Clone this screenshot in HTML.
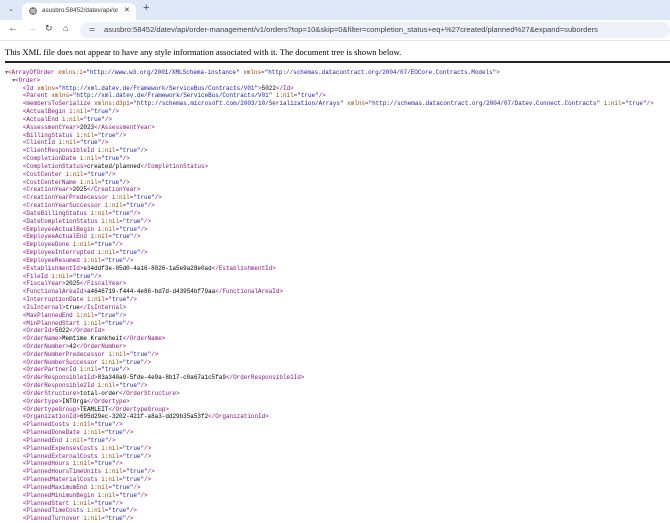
<!DOCTYPE html>
<html><head><meta charset="utf-8"><style>
*{margin:0;padding:0;box-sizing:border-box}
body{width:670px;height:522px;overflow:hidden;background:#fff;font-family:"Liberation Sans",sans-serif;position:relative}
.tabbar{position:absolute;left:0;top:0;width:670px;height:20px;background:#dfe8f6}
.tab{position:absolute;left:22px;top:3px;width:114px;height:17px;background:#fff;border-radius:6px 6px 0 0;font-size:6.3px;color:#333}
.toolbar{position:absolute;left:0;top:20px;width:670px;height:21px;background:#fff;border-bottom:1px solid #e3e3e3}
.url{position:absolute;left:80px;top:2px;width:590px;height:16px;background:#edf1f8;border-radius:8px;font-size:7.6px;color:#444;line-height:16px;padding-left:24px}
.hdr{position:absolute;left:5px;top:47px;font-family:"Liberation Serif",serif;font-size:8.6px;color:#000;white-space:nowrap}
.rule{position:absolute;left:5px;top:61px;width:665px;height:2px;background:#222}
pre{position:absolute;left:5px;top:69px;font-family:"Liberation Mono",monospace;font-size:5.95px;line-height:7.83px;color:#000;white-space:pre}
.t{color:#881280}.a{color:#994500}.v{color:#1a1aa6}.g{color:#666}
</style></head><body>
<div class="tabbar">
<span style="position:absolute;left:8px;top:5px;font-size:7px;color:#444">⌄</span>
<div class="tab"><svg style="position:absolute;left:7px;top:4px" width="8" height="8" viewBox="0 0 8 8"><circle cx="4" cy="4" r="3.3" fill="none" stroke="#555" stroke-width="1"/><path d="M0.8 4h6.4M4 0.8c-1.5 2-1.5 4.4 0 6.4M4 0.8c1.5 2 1.5 4.4 0 6.4" stroke="#555" stroke-width="0.6" fill="none"/></svg><span style="position:absolute;left:20px;top:4px;width:76px;overflow:hidden;white-space:nowrap">asusbro:58452/datev/api/order</span><span style="position:absolute;left:102px;top:3px;font-size:7px">✕</span></div>
<span style="position:absolute;left:143px;top:2px;font-size:11px;color:#444">+</span>
</div>
<div class="toolbar">
<span style="position:absolute;left:8px;top:3px;font-size:10px;color:#444">←</span>
<span style="position:absolute;left:27px;top:3px;font-size:10px;color:#bbb">→</span>
<span style="position:absolute;left:45px;top:3px;font-size:9px;color:#444">↻</span>
<span style="position:absolute;left:63px;top:3px;font-size:9px;color:#444">⌂</span>
<div class="url"><span style="position:absolute;left:9px;top:0;font-size:7px">⚌</span>asusbro:58452/datev/api/order-management/v1/orders?top=10&amp;skip=0&amp;filter=completion_status+eq+%27created/planned%27&amp;expand=suborders</div>
</div>
<div class="hdr">This XML file does not appear to have any style information associated with it. The document tree is shown below.</div>
<div class="rule"></div>
<pre><span class="g">▾</span><span class="t">&lt;ArrayOfOrder</span> <span class="a">xmlns:i</span><span class="t">=</span><span class="v">"http://www.w3.org/2001/XMLSchema-instance"</span> <span class="a">xmlns</span><span class="t">=</span><span class="v">"http://schemas.datacontract.org/2004/07/EOCore.Contracts.Models"</span><span class="t">&gt;</span>
  <span class="g">▾</span><span class="t">&lt;Order&gt;</span>
     <span class="t">&lt;Id</span> <span class="a">xmlns</span><span class="t">=</span><span class="v">"http://xml.datev.de/Framework/ServiceBus/Contracts/V01"</span><span class="t">&gt;</span>5022<span class="t">&lt;/Id&gt;</span>
     <span class="t">&lt;Parent</span> <span class="a">xmlns</span><span class="t">=</span><span class="v">"http://xml.datev.de/Framework/ServiceBus/Contracts/V01"</span> <span class="a">i:nil</span><span class="t">=</span><span class="v">"true"</span><span class="t">/&gt;</span>
     <span class="t">&lt;membersToSerialize</span> <span class="a">xmlns:d3p1</span><span class="t">=</span><span class="v">"http://schemas.microsoft.com/2003/10/Serialization/Arrays"</span> <span class="a">xmlns</span><span class="t">=</span><span class="v">"http://schemas.datacontract.org/2004/07/Datev.Connect.Contracts"</span> <span class="a">i:nil</span><span class="t">=</span><span class="v">"true"</span><span class="t">/&gt;</span>
     <span class="t">&lt;ActualBegin</span> <span class="a">i:nil</span><span class="t">=</span><span class="v">"true"</span><span class="t">/&gt;</span>
     <span class="t">&lt;ActualEnd</span> <span class="a">i:nil</span><span class="t">=</span><span class="v">"true"</span><span class="t">/&gt;</span>
     <span class="t">&lt;AssessmentYear&gt;</span>2023<span class="t">&lt;/AssessmentYear&gt;</span>
     <span class="t">&lt;BillingStatus</span> <span class="a">i:nil</span><span class="t">=</span><span class="v">"true"</span><span class="t">/&gt;</span>
     <span class="t">&lt;ClientId</span> <span class="a">i:nil</span><span class="t">=</span><span class="v">"true"</span><span class="t">/&gt;</span>
     <span class="t">&lt;ClientResponsibleId</span> <span class="a">i:nil</span><span class="t">=</span><span class="v">"true"</span><span class="t">/&gt;</span>
     <span class="t">&lt;CompletionDate</span> <span class="a">i:nil</span><span class="t">=</span><span class="v">"true"</span><span class="t">/&gt;</span>
     <span class="t">&lt;CompletionStatus&gt;</span>created/planned<span class="t">&lt;/CompletionStatus&gt;</span>
     <span class="t">&lt;CostCenter</span> <span class="a">i:nil</span><span class="t">=</span><span class="v">"true"</span><span class="t">/&gt;</span>
     <span class="t">&lt;CostCenterName</span> <span class="a">i:nil</span><span class="t">=</span><span class="v">"true"</span><span class="t">/&gt;</span>
     <span class="t">&lt;CreationYear&gt;</span>2025<span class="t">&lt;/CreationYear&gt;</span>
     <span class="t">&lt;CreationYearPredecessor</span> <span class="a">i:nil</span><span class="t">=</span><span class="v">"true"</span><span class="t">/&gt;</span>
     <span class="t">&lt;CreationYearSuccessor</span> <span class="a">i:nil</span><span class="t">=</span><span class="v">"true"</span><span class="t">/&gt;</span>
     <span class="t">&lt;DateBillingStatus</span> <span class="a">i:nil</span><span class="t">=</span><span class="v">"true"</span><span class="t">/&gt;</span>
     <span class="t">&lt;DateCompletionStatus</span> <span class="a">i:nil</span><span class="t">=</span><span class="v">"true"</span><span class="t">/&gt;</span>
     <span class="t">&lt;EmployeeActualBegin</span> <span class="a">i:nil</span><span class="t">=</span><span class="v">"true"</span><span class="t">/&gt;</span>
     <span class="t">&lt;EmployeeActualEnd</span> <span class="a">i:nil</span><span class="t">=</span><span class="v">"true"</span><span class="t">/&gt;</span>
     <span class="t">&lt;EmployeeDone</span> <span class="a">i:nil</span><span class="t">=</span><span class="v">"true"</span><span class="t">/&gt;</span>
     <span class="t">&lt;EmployeeInterrupted</span> <span class="a">i:nil</span><span class="t">=</span><span class="v">"true"</span><span class="t">/&gt;</span>
     <span class="t">&lt;EmployeeResumed</span> <span class="a">i:nil</span><span class="t">=</span><span class="v">"true"</span><span class="t">/&gt;</span>
     <span class="t">&lt;EstablishmentId&gt;</span>e34ddf3e-05d0-4a16-8026-1a5e9a28e0ad<span class="t">&lt;/EstablishmentId&gt;</span>
     <span class="t">&lt;FileId</span> <span class="a">i:nil</span><span class="t">=</span><span class="v">"true"</span><span class="t">/&gt;</span>
     <span class="t">&lt;FiscalYear&gt;</span>2025<span class="t">&lt;/FiscalYear&gt;</span>
     <span class="t">&lt;FunctionalAreaId&gt;</span>a4646719-f444-4e86-bd7d-d43954bf79aa<span class="t">&lt;/FunctionalAreaId&gt;</span>
     <span class="t">&lt;InterruptionDate</span> <span class="a">i:nil</span><span class="t">=</span><span class="v">"true"</span><span class="t">/&gt;</span>
     <span class="t">&lt;IsInternal&gt;</span>true<span class="t">&lt;/IsInternal&gt;</span>
     <span class="t">&lt;MaxPlannedEnd</span> <span class="a">i:nil</span><span class="t">=</span><span class="v">"true"</span><span class="t">/&gt;</span>
     <span class="t">&lt;MinPlannedStart</span> <span class="a">i:nil</span><span class="t">=</span><span class="v">"true"</span><span class="t">/&gt;</span>
     <span class="t">&lt;OrderId&gt;</span>5022<span class="t">&lt;/OrderId&gt;</span>
     <span class="t">&lt;OrderName&gt;</span>Memtime Krankheit<span class="t">&lt;/OrderName&gt;</span>
     <span class="t">&lt;OrderNumber&gt;</span>42<span class="t">&lt;/OrderNumber&gt;</span>
     <span class="t">&lt;OrderNumberPredecessor</span> <span class="a">i:nil</span><span class="t">=</span><span class="v">"true"</span><span class="t">/&gt;</span>
     <span class="t">&lt;OrderNumberSuccessor</span> <span class="a">i:nil</span><span class="t">=</span><span class="v">"true"</span><span class="t">/&gt;</span>
     <span class="t">&lt;OrderPartnerId</span> <span class="a">i:nil</span><span class="t">=</span><span class="v">"true"</span><span class="t">/&gt;</span>
     <span class="t">&lt;OrderResponsible1Id&gt;</span>83a340a9-5fde-4e9a-8b17-c0a67a1c5fa9<span class="t">&lt;/OrderResponsible1Id&gt;</span>
     <span class="t">&lt;OrderResponsible2Id</span> <span class="a">i:nil</span><span class="t">=</span><span class="v">"true"</span><span class="t">/&gt;</span>
     <span class="t">&lt;OrderStructure&gt;</span>total-order<span class="t">&lt;/OrderStructure&gt;</span>
     <span class="t">&lt;Ordertype&gt;</span>INTOrga<span class="t">&lt;/Ordertype&gt;</span>
     <span class="t">&lt;OrdertypeGroup&gt;</span>TEAMLEIT<span class="t">&lt;/OrdertypeGroup&gt;</span>
     <span class="t">&lt;OrganizationId&gt;</span>695d29ec-3202-421f-a8a3-dd29b35a53f2<span class="t">&lt;/OrganizationId&gt;</span>
     <span class="t">&lt;PlannedCosts</span> <span class="a">i:nil</span><span class="t">=</span><span class="v">"true"</span><span class="t">/&gt;</span>
     <span class="t">&lt;PlannedDoneDate</span> <span class="a">i:nil</span><span class="t">=</span><span class="v">"true"</span><span class="t">/&gt;</span>
     <span class="t">&lt;PlannedEnd</span> <span class="a">i:nil</span><span class="t">=</span><span class="v">"true"</span><span class="t">/&gt;</span>
     <span class="t">&lt;PlannedExpensesCosts</span> <span class="a">i:nil</span><span class="t">=</span><span class="v">"true"</span><span class="t">/&gt;</span>
     <span class="t">&lt;PlannedExternalCosts</span> <span class="a">i:nil</span><span class="t">=</span><span class="v">"true"</span><span class="t">/&gt;</span>
     <span class="t">&lt;PlannedHours</span> <span class="a">i:nil</span><span class="t">=</span><span class="v">"true"</span><span class="t">/&gt;</span>
     <span class="t">&lt;PlannedHoursTimeUnits</span> <span class="a">i:nil</span><span class="t">=</span><span class="v">"true"</span><span class="t">/&gt;</span>
     <span class="t">&lt;PlannedMaterialCosts</span> <span class="a">i:nil</span><span class="t">=</span><span class="v">"true"</span><span class="t">/&gt;</span>
     <span class="t">&lt;PlannedMaximumEnd</span> <span class="a">i:nil</span><span class="t">=</span><span class="v">"true"</span><span class="t">/&gt;</span>
     <span class="t">&lt;PlannedMinimunBegin</span> <span class="a">i:nil</span><span class="t">=</span><span class="v">"true"</span><span class="t">/&gt;</span>
     <span class="t">&lt;PlannedStart</span> <span class="a">i:nil</span><span class="t">=</span><span class="v">"true"</span><span class="t">/&gt;</span>
     <span class="t">&lt;PlannedTimeCosts</span> <span class="a">i:nil</span><span class="t">=</span><span class="v">"true"</span><span class="t">/&gt;</span>
     <span class="t">&lt;PlannedTurnover</span> <span class="a">i:nil</span><span class="t">=</span><span class="v">"true"</span><span class="t">/&gt;</span>
</pre>
</body></html>
